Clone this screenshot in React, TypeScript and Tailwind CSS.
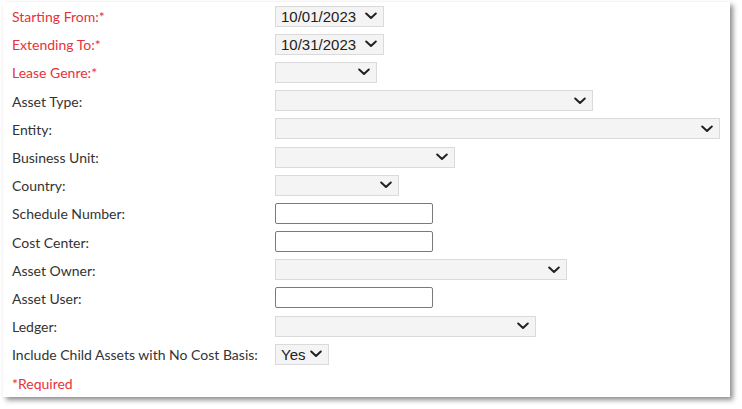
import { ReactNode } from 'react';

type Field =
  | { label: string; required?: boolean; kind: 'select'; width: string; value?: string }
  | { label: string; required?: boolean; kind: 'input' };

const fields: Field[] = [
  { label: 'Starting From:', required: true, kind: 'select', width: 'w-[109px]', value: '10/01/2023' },
  { label: 'Extending To:', required: true, kind: 'select', width: 'w-[109px]', value: '10/31/2023' },
  { label: 'Lease Genre:', required: true, kind: 'select', width: 'w-[102px]' },
  { label: 'Asset Type:', kind: 'select', width: 'w-[318px]' },
  { label: 'Entity:', kind: 'select', width: 'w-[445px]' },
  { label: 'Business Unit:', kind: 'select', width: 'w-[180px]' },
  { label: 'Country:', kind: 'select', width: 'w-[124px]' },
  { label: 'Schedule Number:', kind: 'input' },
  { label: 'Cost Center:', kind: 'input' },
  { label: 'Asset Owner:', kind: 'select', width: 'w-[292px]' },
  { label: 'Asset User:', kind: 'input' },
  { label: 'Ledger:', kind: 'select', width: 'w-[261px]' },
  { label: 'Include Child Assets with No Cost Basis:', kind: 'select', width: 'w-[54px]', value: 'Yes' },
];

function Chevron() {
  return (
    <svg width="12" height="8" viewBox="0 0 12 8" fill="none" className="shrink-0">
      <path d="M1.2 1.5 L6 6 L10.8 1.5" stroke="#222" strokeWidth="2" strokeLinecap="round" strokeLinejoin="round" />
    </svg>
  );
}

function FakeSelect({ width, value }: { width: string; value?: string }) {
  return (
    <div
      className={`${width} h-[21px] flex items-center justify-between pl-[5px] pr-[6px] bg-[#f4f4f4] border border-[#dadada] text-[15px] text-[#222] font-['Liberation_Sans',Arial,sans-serif]`}
    >
      <span className="leading-none">{value ?? ''}</span>
      <Chevron />
    </div>
  );
}

function TextBox() {
  return <div className="w-[158px] h-[21px] bg-white border border-[#7a7a7a] rounded-[2px]" />;
}

function Label({ children, required }: { children: ReactNode; required?: boolean }) {
  return (
    <span className={`pt-[1px] ${required ? 'text-[#e8323a]' : 'text-[#333333]'}`}>
      {children}
      {required && '*'}
    </span>
  );
}

export default function App() {
  return (
    <div className="w-[742px] h-[409px] bg-white pt-[2px] pl-[3px]">
      <div className="w-[727px] h-[395px] bg-white shadow-[3px_3px_5px_rgba(0,0,0,0.45)] pl-[9px] font-['Lato','Noto_Sans',sans-serif] text-[14px]">
        <div className="grid grid-cols-[263px_1fr] auto-rows-[28.2px] items-center">
          {fields.map((f) => (
            <div key={f.label} className="contents">
              <Label required={f.required}>{f.label}</Label>
              <div>{f.kind === 'select' ? <FakeSelect width={f.width} value={f.value} /> : <TextBox />}</div>
            </div>
          ))}
          <span className="text-[#e8323a] pt-[1px] col-span-2">*Required</span>
        </div>
      </div>
    </div>
  );
}
